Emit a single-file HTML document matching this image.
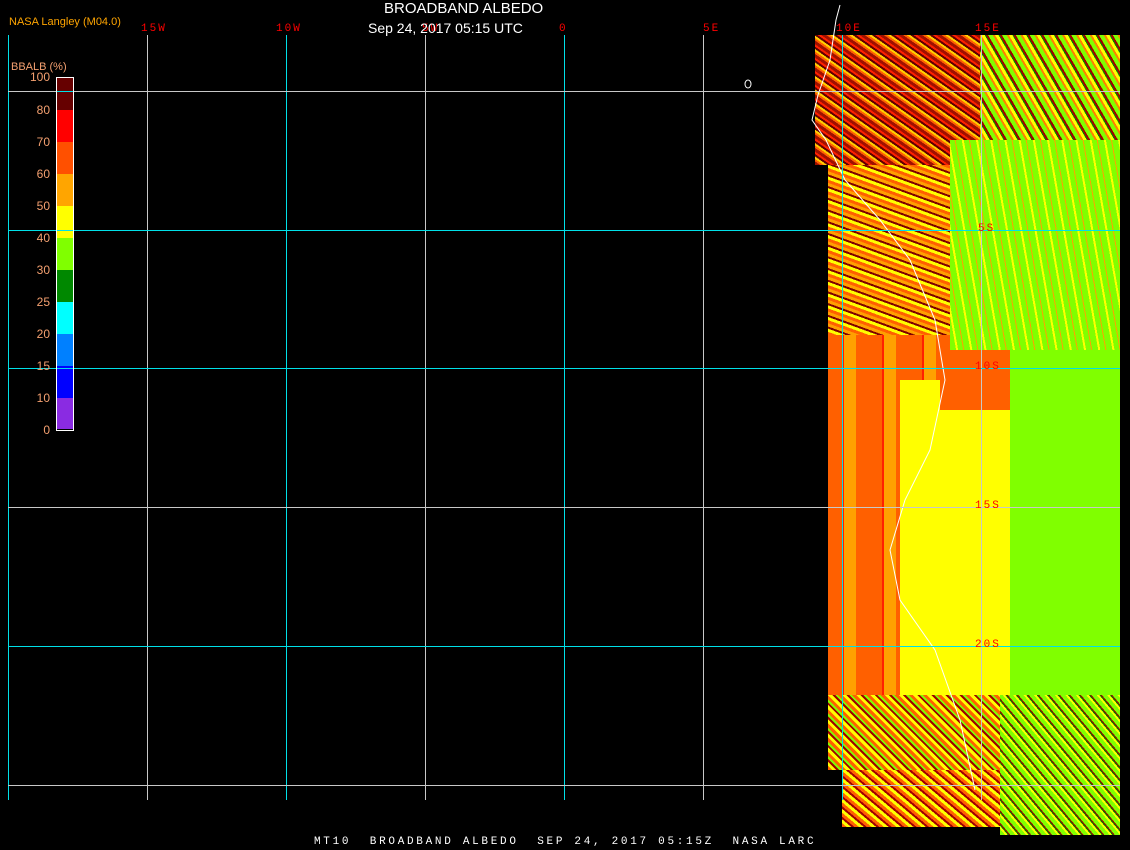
<!DOCTYPE html>
<html><head><style>
body{margin:0;width:1130px;height:850px;background:#000;overflow:hidden;position:relative;font-family:"Liberation Sans",sans-serif}
div,span{position:absolute}
.v{width:1px;top:35px;height:765px}
.h{height:1px;left:8px;width:1112px}
.c{background:#00e0e8}.g{background:#c8c8c8}
.lab{color:#f00;font-size:11px;font-family:"Liberation Mono",monospace;letter-spacing:2px}
.n{color:#f4a070;font-size:12px;right:1080px;text-align:right;width:40px}
.sw{left:57px;width:16px;height:32px}
</style></head><body>
<div style="left:815px;top:35px;width:305px;height:130px;background:repeating-linear-gradient(35deg,#a01000 0 3px,#ff6000 3px 5px,#ffd000 5px 7px,#600000 7px 9px,#ff2000 9px 11px)"></div>
<div style="left:980px;top:35px;width:140px;height:130px;background:repeating-linear-gradient(60deg,#80ff00 0 4px,#ff8000 4px 6px,#ffff00 6px 9px,#008800 9px 10px,#a00000 10px 12px)"></div>
<div style="left:828px;top:165px;width:292px;height:170px;background:repeating-linear-gradient(20deg,#ff6000 0 3px,#ffff00 3px 6px,#800000 6px 8px,#ffa000 8px 11px)"></div>
<div style="left:950px;top:140px;width:170px;height:210px;background:repeating-linear-gradient(80deg,#80ff00 0 6px,#ffff00 6px 8px,#80ff00 8px 13px,#ffa000 13px 14px)"></div>
<div style="left:828px;top:335px;width:122px;height:360px;background:repeating-linear-gradient(90deg,#ff6000 0 14px,#ff2000 14px 16px,#ffa000 16px 28px,#ff6000 28px 40px)"></div>
<div style="left:900px;top:380px;width:110px;height:320px;background:#ffff00"></div>
<div style="left:940px;top:350px;width:70px;height:60px;background:#ff6000"></div>
<div style="left:1010px;top:350px;width:110px;height:400px;background:#80ff00"></div>
<div style="left:828px;top:695px;width:292px;height:75px;background:repeating-linear-gradient(45deg,#ff6000 0 3px,#ffff00 3px 6px,#a00000 6px 8px,#80ff00 8px 10px)"></div>
<div style="left:1000px;top:695px;width:120px;height:140px;background:repeating-linear-gradient(50deg,#80ff00 0 4px,#ffff00 4px 6px,#008000 6px 7px,#a00000 7px 8px)"></div>
<div style="left:842px;top:770px;width:158px;height:57px;background:repeating-linear-gradient(40deg,#ff6000 0 3px,#ffff00 3px 6px,#a00000 6px 8px)"></div>
<svg style="position:absolute;left:0;top:0" width="1130" height="850"><path d="M840 5 L836 20 L830 60 L818 95 L812 120 L826 140 L845 180 L880 220 L910 260 L935 320 L945 380 L930 450 L905 500 L890 550 L900 600 L935 650 L960 720 L975 790" stroke="#fff" stroke-width="1" fill="none"/><ellipse cx="748" cy="84" rx="3" ry="4" stroke="#fff" fill="none"/></svg>
<div class="v c" style="left:8px"></div><div class="v g" style="left:147px"></div><div class="v c" style="left:286px"></div><div class="v g" style="left:425px"></div><div class="v c" style="left:564px"></div><div class="v g" style="left:703px"></div><div class="v c" style="left:842px"></div><div class="v g" style="left:981px"></div>
<div class="h g" style="top:91px"></div><div class="h c" style="top:230px"></div><div class="h c" style="top:368px"></div><div class="h g" style="top:507px"></div><div class="h c" style="top:646px"></div><div class="h g" style="top:785px"></div>
<span class="lab" style="left:141px;top:23px">15W</span><span class="lab" style="left:276px;top:23px">10W</span><span class="lab" style="left:422px;top:23px">5W</span><span class="lab" style="left:559px;top:23px">0</span><span class="lab" style="left:703px;top:23px">5E</span><span class="lab" style="left:836px;top:23px">10E</span><span class="lab" style="left:975px;top:23px">15E</span>
<span class="lab" style="left:978px;top:223px">5S</span><span class="lab" style="left:975px;top:361px">10S</span><span class="lab" style="left:975px;top:500px">15S</span><span class="lab" style="left:975px;top:639px">20S</span>
<span style="left:384px;top:0px;color:#fff;font-size:15px">BROADBAND ALBEDO</span>
<span style="left:368px;top:20px;color:#fff;font-size:14px">Sep 24, 2017 05:15 UTC</span>
<span style="left:9px;top:16px;color:#ffa500;font-size:11px">NASA Langley (M04.0)</span>
<span style="left:11px;top:61px;color:#f4a070;font-size:11px">BBALB (%)</span>
<div style="left:56px;top:77px;width:16px;height:352px;border:1px solid #fff"></div>
<div class="sw" style="top:78px;background:#660000"></div><div class="sw" style="top:110px;background:#f00"></div><div class="sw" style="top:142px;background:#ff5000"></div><div class="sw" style="top:174px;background:#ffa500"></div><div class="sw" style="top:206px;background:#ff0"></div><div class="sw" style="top:238px;background:#80ff00"></div><div class="sw" style="top:270px;background:#008800"></div><div class="sw" style="top:302px;background:#0ff"></div><div class="sw" style="top:334px;background:#0080ff"></div><div class="sw" style="top:366px;background:#0000ff"></div><div class="sw" style="top:398px;background:#8a2be2;height:31px"></div>
<div class="h c" style="top:91px;left:57px;width:16px"></div><div class="h c" style="top:230px;left:57px;width:16px"></div><div class="h c" style="top:368px;left:57px;width:16px"></div>
<span class="n" style="top:70px">100</span><span class="n" style="top:103px">80</span><span class="n" style="top:135px">70</span><span class="n" style="top:167px">60</span><span class="n" style="top:199px">50</span><span class="n" style="top:231px">40</span><span class="n" style="top:263px">30</span><span class="n" style="top:295px">25</span><span class="n" style="top:327px">20</span><span class="n" style="top:359px">15</span><span class="n" style="top:391px">10</span><span class="n" style="top:423px">0</span>
<span style="left:314px;top:836px;color:#fff;font-size:11px;font-family:'Liberation Mono',monospace;white-space:pre;letter-spacing:2.7px">MT10  BROADBAND ALBEDO  SEP 24, 2017 05:15Z  NASA LARC</span>
</body></html>
